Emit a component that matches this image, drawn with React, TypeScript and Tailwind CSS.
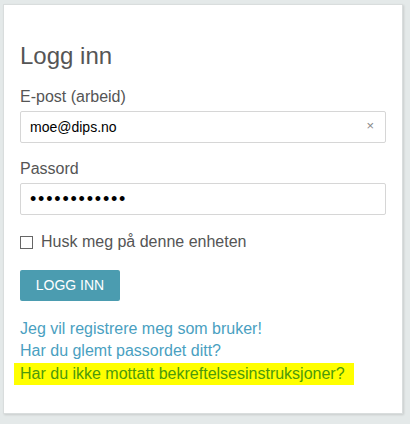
export default function App() {
  return (
    <div className="min-h-[424px] w-[410px] bg-[#e4e9e9] pl-[3px] pr-[7px] pt-[4px] pb-[9px] font-['Liberation_Sans',Arial,sans-serif]">
      <div className="border border-[#d9dddd] bg-white px-4 pt-[36px] pb-[28px] shadow-[1px_1px_2px_rgba(0,0,0,0.12)]">
        <h1 className="text-[24px] leading-[30px] text-[#555]">Logg inn</h1>

        <form className="mt-[16px]" onSubmit={(e) => e.preventDefault()}>
          <label className="block text-[16px] leading-[20px] text-[#555]">E-post (arbeid)</label>
          <div className="relative mt-[4px]">
            <input
              type="email"
              defaultValue="moe@dips.no"
              className="h-[32px] w-full rounded-[2px] border border-[#d6d6d6] px-[9px] text-[14px] text-black outline-none"
            />
            <span className="absolute right-[12px] top-[7px] text-[13px] leading-[16px] text-[#888]">×</span>
          </div>

          <label className="mt-[16px] block text-[16px] leading-[20px] text-[#555]">Passord</label>
          <input
            type="password"
            defaultValue="dipsdipsdips"
            className="mt-[4px] h-[32px] w-full rounded-[2px] border border-[#d6d6d6] px-[9px] text-[18px] tracking-[1.8px] text-black outline-none"
          />

          <label className="mt-[17px] flex items-center gap-[8px] text-[16px] leading-[20px] text-[#555]">
            <span className="block h-[13px] w-[13px] border border-[#666] bg-white" />
            Husk meg på denne enheten
          </label>

          <button
            type="submit"
            className="mt-[18px] h-[31px] w-[100px] rounded-[2px] bg-[#4b9cb0] text-[14px] text-white"
          >
            LOGG INN
          </button>
        </form>

        <div className="mt-[17px] flex flex-col text-[16px] leading-[22px] text-[#4a9fc1]">
          <a href="#">Jeg vil registrere meg som bruker!</a>
          <a href="#">Har du glemt passordet ditt?</a>
          <a href="#" className="-ml-[6px] mt-[1px] w-[340px] bg-[#ffff00] pl-[6px] text-[#4c9a0c]">
            Har du ikke mottatt bekreftelsesinstruksjoner?
          </a>
        </div>
      </div>
    </div>
  );
}
